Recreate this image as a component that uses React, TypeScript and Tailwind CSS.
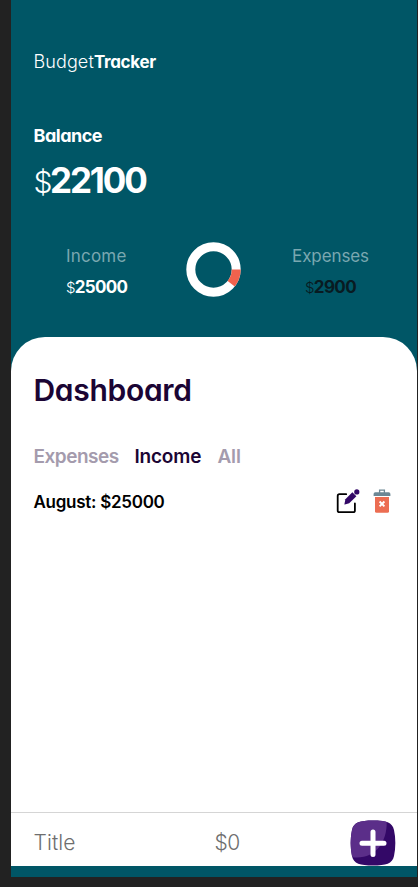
import React from "react";

function BudgetRing() {
  return (
    <svg width="56" height="56" viewBox="0 0 56 56" className="block">
      <circle cx="27.5" cy="27.5" r="22.7" fill="none" stroke="#fff" strokeWidth="9" />
      <path d="M50.2 27.5A22.7 22.7 0 0 1 45.2 41.7" fill="none" stroke="#f0624d" strokeWidth="9" />
    </svg>
  );
}

function EditIcon() {
  return (
    <svg width="24" height="25" viewBox="0 0 24 25" className="block">
      <path d="M10.2 5.2H3.5Q1.7 5.2 1.7 7V21.4Q1.7 23.2 3.5 23.2H17.1Q18.9 23.2 18.9 21.4V14.5" fill="none" stroke="#000" strokeWidth="1.8" strokeLinecap="round" />
      <path d="M16.4 3.2 20.4 7.2 13.2 14.2 8.8 15.6Q8.3 15.7 8.4 15.2L9.4 10.3Z" fill="#330867" />
      <circle cx="20.8" cy="2.9" r="2.6" fill="#330867" />
    </svg>
  );
}

function TrashIcon() {
  return (
    <svg width="18" height="25" viewBox="0 0 18 25" className="block">
      <path d="M6.6 4V1.2H11.4V4" fill="none" stroke="#6c8794" strokeWidth="1.3" />
      <path d="M2.3 3.2H15.7Q17.4 3.2 17.4 5V7H.6V5Q.6 3.2 2.3 3.2Z" fill="#6c8794" />
      <path d="M2 8H16V22.3Q16 23.8 14.5 23.8H3.5Q2 23.8 2 22.3Z" fill="#ec6d52" />
      <path d="m6.6 12.5 4.8 4.8m0-4.8-4.8 4.8" stroke="#fff" strokeWidth="1.9" />
    </svg>
  );
}

function AddIcon() {
  return (
    <svg width="46" height="46" viewBox="0 0 46 46" className="block">
      <path d="M23 .5C36 .5 42.3 2.2 44 10C45.8 18 45.8 28 44 36C42.3 43.8 36 45.5 23 45.5C10 45.5 3.7 43.8 2 36C.2 28 .2 18 2 10C3.7 2.2 10 .5 23 .5Z" fill="#330867" />
      <path d="M23 .5C30 .5 33.5 .9 36.7 2C37 22 26 37.5 7 37.5Q4.2 37.5 2.2 37C.2 28 .2 18 2 10C3.7 2.2 10 .5 23 .5Z" fill="#5b2e89" />
      <path d="M23 12V34.5M12 23.2H34" stroke="#fff" strokeWidth="5" strokeLinecap="round" />
    </svg>
  );
}

export default function App() {
  return (
    <div className="h-[887px] w-[418px] bg-[#222] pl-[11px] font-['Inter','Liberation_Sans',sans-serif] [font-feature-settings:'cv11']">
      <main className="flex h-[877px] w-[405.5px] flex-col bg-[#005666] pb-[11px]">
        <header className="h-[337px] pt-[50px] text-white">
          <h1 className="ml-[22.5px] h-6 text-[18px] leading-6 font-light tracking-[0.1px] whitespace-nowrap">
            Budget<span className="text-[17px] font-bold tracking-[-0.3px]">Tracker</span>
          </h1>
          <h2 className="mt-[50px] ml-[22.5px] h-6 text-[18px] leading-6 font-bold tracking-[-0.5px]">Balance</h2>
          <p className="mt-[10px] ml-[22.5px] h-11 text-[35px] leading-[44px] font-bold tracking-[-2.1px]">
            <span className="text-[30px] font-light tracking-[-2.5px]">$</span>22100
          </p>
          <div className="mt-[40px] flex items-start">
            <div className="mt-[2px] ml-[55px] w-[120px] text-[17px]">
              <p className="leading-6 tracking-[0.2px] text-[#7aa7b0]">Income</p>
              <p className="mt-[7px] leading-6 font-bold tracking-[-0.7px]"><span className="text-[15px] font-light">$</span>25000</p>
            </div>
            <BudgetRing />
            <div className="mt-[2px] ml-[49px] w-[79px] text-center text-[17px]">
              <p className="leading-6 tracking-[-0.1px] text-[#7aa7b0]">Expenses</p>
              <p className="mt-[7px] leading-6 font-bold tracking-[-0.6px] text-[#081b22]"><span className="text-[15px] font-light">$</span>2900</p>
            </div>
          </div>
        </header>
        <section className="flex grow flex-col rounded-t-[34px] bg-white">
          <h2 className="mt-[33px] ml-[22.5px] h-10 text-[30px] leading-10 font-semibold tracking-[-0.3px] text-[#1b0534]">Dashboard</h2>
          <nav className="mt-[35px] ml-[22.5px] flex h-6 text-[19px] leading-6 font-semibold tracking-[-0.5px]">
            <span className="w-[101px] text-[#a49bad]">Expenses</span>
            <span className="w-[83px] tracking-[-0.2px] text-[#1b0534]">Income</span>
            <span className="tracking-[-0.2px] text-[#a49bad]">All</span>
          </nav>
          <div className="mt-[19px] ml-[22.5px] flex h-[27px] items-center">
            <span className="w-[302px] text-[17px] leading-6 font-semibold tracking-[-0.27px]">August: $25000</span>
            <EditIcon />
            <span className="w-[13.5px]" />
            <TrashIcon />
          </div>
          <form className="mt-auto flex h-[54px] items-center border-t border-[#d5d5d5] pl-[22.5px] text-[21px] font-light text-[#6e6e6e]">
            <span className="w-[181px] pt-[7px] tracking-[0.1px]">Title</span>
            <span className="w-[135.5px] pt-[7px] tracking-[-0.4px]">$0</span>
            <span className="mt-[6px]"><AddIcon /></span>
          </form>
        </section>
      </main>
    </div>
  );
}
